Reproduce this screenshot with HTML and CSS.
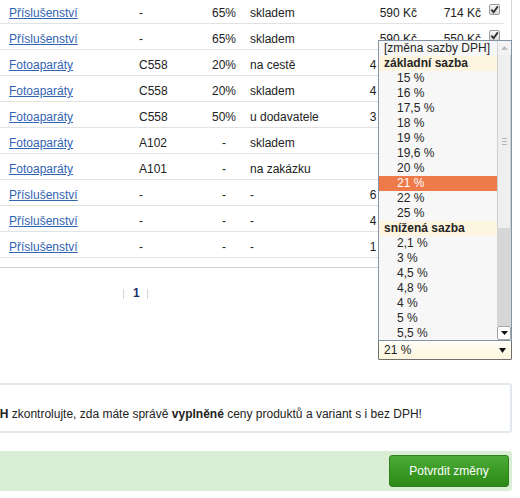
FILE: index.html
```html
<!DOCTYPE html>
<html lang="cs">
<head>
    <meta charset="UTF-8">
    <title>Produkty - sazby DPH</title>
    <link rel="stylesheet" href="styles.css">
</head>
<body>

    <div class="page">
        <!--seznam produktů-->
        <div class="panel">
            <table class="products">
                <colgroup>
                    <col class="c-cat"><col class="c-code"><col class="c-disc"><col class="c-stock">
                    <col class="c-price"><col class="c-price2"><col class="c-check">
                </colgroup>
                <tr>
                    <td><a href="#">Příslušenství</a></td><td>-</td><td class="mid">65%</td><td>skladem</td>
                    <td class="num">590 Kč</td><td class="num">714 Kč</td><td><span class="check"><svg viewBox="0 0 11 11"><path d="M2.3 5.6 4.6 8.2 8.8 2.4"/></svg></span></td>
                </tr>
                <tr>
                    <td><a href="#">Příslušenství</a></td><td>-</td><td class="mid">65%</td><td>skladem</td>
                    <td class="num">590 Kč</td><td class="num">550 Kč</td><td><span class="check"><svg viewBox="0 0 11 11"><path d="M2.3 5.6 4.6 8.2 8.8 2.4"/></svg></span></td>
                </tr>
                <tr>
                    <td><a href="#">Fotoaparáty</a></td><td>C558</td><td class="mid">20%</td><td>na cestě</td>
                    <td class="num">4 990 Kč</td><td class="num">6 038 Kč</td><td><span class="check"></span></td>
                </tr>
                <tr>
                    <td><a href="#">Fotoaparáty</a></td><td>C558</td><td class="mid">20%</td><td>skladem</td>
                    <td class="num">4 490 Kč</td><td class="num">5 433 Kč</td><td><span class="check"></span></td>
                </tr>
                <tr>
                    <td><a href="#">Fotoaparáty</a></td><td>C558</td><td class="mid">50%</td><td>u dodavatele</td>
                    <td class="num">3 990 Kč</td><td class="num">4 828 Kč</td><td><span class="check"></span></td>
                </tr>
                <tr>
                    <td><a href="#">Fotoaparáty</a></td><td>A102</td><td class="mid">-</td><td>skladem</td>
                    <td class="num">-</td><td class="num">-</td><td><span class="check"></span></td>
                </tr>
                <tr>
                    <td><a href="#">Fotoaparáty</a></td><td>A101</td><td class="mid">-</td><td>na zakázku</td>
                    <td class="num">-</td><td class="num">-</td><td><span class="check"></span></td>
                </tr>
                <tr>
                    <td><a href="#">Příslušenství</a></td><td>-</td><td class="mid">-</td><td>-</td>
                    <td class="num">6 490 Kč</td><td class="num">7 853 Kč</td><td><span class="check"></span></td>
                </tr>
                <tr>
                    <td><a href="#">Příslušenství</a></td><td>-</td><td class="mid">-</td><td>-</td>
                    <td class="num">4 290 Kč</td><td class="num">5 191 Kč</td><td><span class="check"></span></td>
                </tr>
                <tr>
                    <td><a href="#">Příslušenství</a></td><td>-</td><td class="mid">-</td><td>-</td>
                    <td class="num">1 290 Kč</td><td class="num">1 561 Kč</td><td><span class="check"></span></td>
                </tr>
            </table>
        </div>

        <!--stránkování-->
        <div class="pager"><i></i><b>1</b><i></i></div>

        <!--hromadná změna sazby-->
        <div class="bulk">
            <div class="vat-select">
                <span>21 %</span>
                <svg class="arrow" viewBox="0 0 7 5"><path d="M0 0h7L3.5 5z"/></svg>

                <div class="vat-menu">
                    <ul class="vat-options">
                        <li class="opt-label">[změna sazby DPH]</li>
                        <li class="grp">základní sazba</li>
                        <li class="opt">15 %</li>
                        <li class="opt">16 %</li>
                        <li class="opt">17,5 %</li>
                        <li class="opt">18 %</li>
                        <li class="opt">19 %</li>
                        <li class="opt">19,6 %</li>
                        <li class="opt">20 %</li>
                        <li class="opt sel">21 %</li>
                        <li class="opt">22 %</li>
                        <li class="opt">25 %</li>
                        <li class="grp">snížená sazba</li>
                        <li class="opt">2,1 %</li>
                        <li class="opt">3 %</li>
                        <li class="opt">4,5 %</li>
                        <li class="opt">4,8 %</li>
                        <li class="opt">4 %</li>
                        <li class="opt">5 %</li>
                        <li class="opt">5,5 %</li>
                        <li class="opt">7 %</li>
                    </ul>
                    <div class="vat-scroll">
                        <div class="sb-up"><svg viewBox="0 0 7 4"><path d="M0 4h7L3.5 0z"/></svg></div>
                        <div class="sb-thumb"><i></i></div>
                        <div class="sb-track"></div>
                        <div class="sb-down"><svg viewBox="0 0 7 4"><path d="M0 0h7L3.5 4z"/></svg></div>
                    </div>
                </div>
            </div>
        </div>

        <!--upozornění-->
        <div class="notice">
            <p><strong>Po změně sazby DPH</strong> zkontrolujte, zda máte správě <strong>vyplněné</strong> ceny produktů a variant s i bez DPH!</p>
        </div>

        <!--tlačítka-->
        <div class="actions">
            <button type="button">Potvrdit změny</button>
        </div>
    </div>

</body>
</html>
```

FILE: styles.css
```css
body{margin:0;font-family:"Liberation Sans",Arial,sans-serif;font-size:12px;color:#222;background:#fff;}
ul,li{margin:0;padding:0;list-style:none;}
p{margin:0;}

.page{
    width: 512px;
}

/* tabulka produktů */
.panel{
    margin-top: -2px;
    padding: 0 7px 9px 0;
    border-right: 1px solid #d6d6d6;
    border-bottom: 1px solid #d0d0d0;
}
.products{
    width: 504px;
    table-layout: fixed;
    border-collapse: collapse;
}
.products .c-cat{width:130px;}
.products .c-code{width:72px;}
.products .c-disc{width:44px;}
.products .c-stock{width:94px;}
.products .c-price{width:81px;}
.products .c-price2{width:64px;}
.products .c-check{width:19px;}

.products td{
    padding: 8px 4px 2px;
    line-height: 15px;
    border-bottom: 1px solid #e2e2e2;
    white-space: nowrap;
    vertical-align: top;
}
.products td:first-child,
.products td:nth-child(2){
    padding-left: 9px;
}
.products td.mid{text-align:center;padding:8px 0 2px;}
.products td.num{text-align:right;}
.products a{
    color: #3363b3;
    text-decoration: underline;
}

.check{
    display: block;
    width: 11px;
    height: 11px;
    margin-top: -2px;
    box-sizing: border-box;
    border: 1px solid #9b9b9b;
    border-radius: 2px;
    background: linear-gradient(#f6f6f6,#dcdcdc);
}
.check svg{
    display: block;
    width: 11px;
    height: 11px;
    margin: -1px 0 0 -1px;
    fill: none;
    stroke: #333;
    stroke-width: 1.9;
}

/* stránkování */
.pager{
    margin-top: 18px;
    padding-left: 123px;
    height: 14px;
    line-height: 14px;
}
.pager i{
    display: inline-block;
    width: 1px;
    height: 10px;
    background: #cdd5df;
    vertical-align: middle;
}
.pager b{
    margin: 0 7px 0 9px;
    color: #1e2f6b;
}

/* výběr sazby DPH */
.bulk{
    margin-top: 40px;
    display: flex;
    justify-content: flex-end;
}
.vat-select{
    position: relative;
    display: flex;
    align-items: center;
    justify-content: space-between;
    width: 134px;
    height: 20px;
    box-sizing: border-box;
    padding: 0 5px 0 5px;
    border: 1px solid #6f6f6f;
    border-radius: 1px;
    background: linear-gradient(#fffef6,#fdf6dd);
    color: #222;
}
.vat-select .arrow{
    width: 7px;
    height: 5px;
    fill: #111;
}

.vat-menu{
    position: absolute;
    left: -1px;
    bottom: 100%;
    display: flex;
    width: 134px;
    height: 301px;
    box-sizing: border-box;
    border: 1px solid #8593a6;
    background: #f7f7f7;
    z-index: 5;
}
.vat-options{
    flex: 1;
    overflow: hidden;
}
.vat-options li{
    height: 15px;
    line-height: 15px;
    white-space: nowrap;
    color: #262626;
}
.vat-options .opt-label{padding-left:5px;}
.vat-options .grp{
    padding-left: 5px;
    font-weight: bold;
    background: #fdf5df;
}
.vat-options .opt{padding-left:18px;}
.vat-options .sel{
    background: #ef7a49;
    color: #fff;
}

.vat-scroll{
    display: flex;
    flex-direction: column;
    width: 14px;
}
.sb-up{
    height: 14px;
    display: flex;
    align-items: center;
    justify-content: center;
    background: #f3f3f3;
    border-left: 1px solid #d2d2d2;
}
.sb-up svg{width:7px;height:4px;fill:#bdbdbd;}
.sb-thumb{
    height: 173px;
    display: flex;
    align-items: center;
    justify-content: center;
    box-sizing: border-box;
    border-left: 1px solid #cfcfcf;
    border-right: 1px solid #cfcfcf;
    background: #efefef;
}
.sb-thumb i{
    display: block;
    width: 5px;
    height: 5px;
    border-top: 1px solid #b5b5b5;
    border-bottom: 1px solid #b5b5b5;
    background: linear-gradient(#b5b5b5,#b5b5b5) center/5px 1px no-repeat;
}
.sb-track{
    flex: 1;
    background: #d6d6d6;
}
.sb-down{
    height: 14px;
    display: flex;
    align-items: center;
    justify-content: center;
    box-sizing: border-box;
    border: 1px solid #a3a3a3;
    border-radius: 2px;
    background: #fff;
}
.sb-down svg{width:7px;height:4px;fill:#111;}

/* upozornění */
.notice{
    margin: 23px 0 0 -140px;
    padding: 22px 10px 9px 25px;
    border: 2px solid #e3e7ee;
    border-radius: 3px;
    line-height: 15px;
    white-space: nowrap;
}

/* spodní lišta */
.actions{
    display: flex;
    justify-content: flex-end;
    margin: 18px 0 0 -10px;
    padding: 4px 3px;
    background: #d9eed4;
    border-radius: 3px;
}
.actions button{
    width: 120px;
    height: 32px;
    border: 1px solid #2f801d;
    border-radius: 3px;
    background: linear-gradient(#4cab35,#2b8a16);
    color: #fff;
    font-family: "Liberation Sans",Arial,sans-serif;
    font-size: 12px;
    cursor: pointer;
}
```
